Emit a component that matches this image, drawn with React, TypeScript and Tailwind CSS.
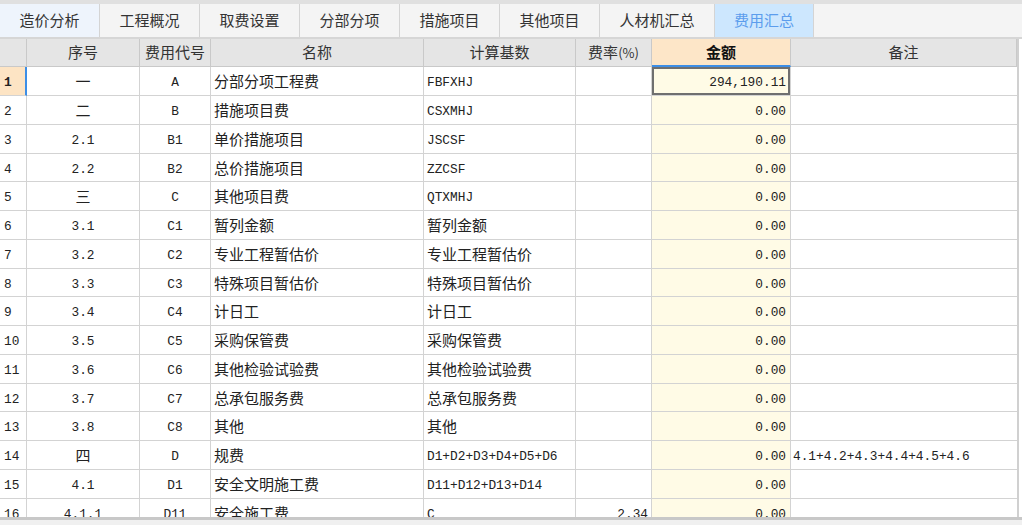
import React from "react";

const tabs = [
  { label: "造价分析", w: "w-[100px]", cls: "bg-[#eef4fc] text-[#333]" },
  { label: "工程概况", w: "w-[100px]", cls: "bg-[#f4f4f4] text-[#333]" },
  { label: "取费设置", w: "w-[100px]", cls: "bg-[#f4f4f4] text-[#333]" },
  { label: "分部分项", w: "w-[100px]", cls: "bg-[#f4f4f4] text-[#333]" },
  { label: "措施项目", w: "w-[100px]", cls: "bg-[#f4f4f4] text-[#333]" },
  { label: "其他项目", w: "w-[100px]", cls: "bg-[#f4f4f4] text-[#333]" },
  { label: "人材机汇总", w: "w-[115px]", cls: "bg-[#f4f4f4] text-[#333]" },
  { label: "费用汇总", w: "w-[99px]", cls: "bg-[#cde7fe] text-[#5c9ded]" },
];

type Row = [string, string, string, string, string, string, string];

const rows: Row[] = [
  ["一", "A", "分部分项工程费", "FBFXHJ", "", "294,190.11", ""],
  ["二", "B", "措施项目费", "CSXMHJ", "", "0.00", ""],
  ["2.1", "B1", "单价措施项目", "JSCSF", "", "0.00", ""],
  ["2.2", "B2", "总价措施项目", "ZZCSF", "", "0.00", ""],
  ["三", "C", "其他项目费", "QTXMHJ", "", "0.00", ""],
  ["3.1", "C1", "暂列金额", "暂列金额", "", "0.00", ""],
  ["3.2", "C2", "专业工程暂估价", "专业工程暂估价", "", "0.00", ""],
  ["3.3", "C3", "特殊项目暂估价", "特殊项目暂估价", "", "0.00", ""],
  ["3.4", "C4", "计日工", "计日工", "", "0.00", ""],
  ["3.5", "C5", "采购保管费", "采购保管费", "", "0.00", ""],
  ["3.6", "C6", "其他检验试验费", "其他检验试验费", "", "0.00", ""],
  ["3.7", "C7", "总承包服务费", "总承包服务费", "", "0.00", ""],
  ["3.8", "C8", "其他", "其他", "", "0.00", ""],
  ["四", "D", "规费", "D1+D2+D3+D4+D5+D6", "", "0.00", "4.1+4.2+4.3+4.4+4.5+4.6"],
  ["4.1", "D1", "安全文明施工费", "D11+D12+D13+D14", "", "0.00", ""],
  ["4.1.1", "D11", "安全施工费", "C", "2.34", "0.00", ""],
];

const cols = "grid grid-cols-[27px_113px_71px_213px_152px_76px_139px_226px]";
const cjk = "font-['Noto_Sans_CJK_SC',sans-serif] text-[15px]";
const mono = "font-['Liberation_Mono','Noto_Sans_CJK_SC',monospace] text-[12.8px]";

function T({ s }: { s: string }) {
  // ascii goes monospace, the rest gets the CJK face; nudge so both sit on the same middle
  const ascii = /^[\x00-\x7f]*$/.test(s);
  return (
    <span className={`inline-block leading-none ${ascii ? `${mono} pt-[5px]` : `${cjk} pb-[1px]`}`}>
      {s}
    </span>
  );
}

export default function App() {
  return (
    <div className="w-[1022px] h-[525px] overflow-hidden bg-white text-[#222] flex flex-col">
      <div className="h-[4px] bg-[#e0e0e0]" />
      <div className="h-[33px] flex bg-[#f4f4f4]">
        {tabs.map((t) => (
          <div
            key={t.label}
            className={`${t.w} ${t.cls} ${cjk} border-r border-[#d4d4d4] flex items-center justify-center`}
          >
            {t.label}
          </div>
        ))}
      </div>
      <div className="h-[2px] bg-[#d6d6d6]" />

      <div className="h-[478px] overflow-hidden">
        <div className="w-[1019px] border-r-2 border-[#d0d0d0]">
          <div className={`${cols} h-[28px] bg-[#e5e5e5] text-[#333] ${cjk}`}>
            <div className="border-r border-b border-[#c9c9c9]" />
            <div className="border-r border-b border-[#c9c9c9] flex items-center justify-center">序号</div>
            <div className="border-r border-b border-[#c9c9c9] flex items-center justify-center">费用代号</div>
            <div className="border-r border-b border-[#c9c9c9] flex items-center justify-center">名称</div>
            <div className="border-r border-b border-[#c9c9c9] flex items-center justify-center">计算基数</div>
            <div className="border-r border-b border-[#c9c9c9] flex items-center justify-center">
              费率<span className="text-[13px]">(%)</span>
            </div>
            <div className="border-r border-b-2 border-[#c9c9c9] border-b-[#3d8ee6] bg-[#fde6c8] flex items-center justify-center font-bold text-[#111]">
              金额
            </div>
            <div className="border-r border-b border-[#c9c9c9] flex items-center justify-center">备注</div>
          </div>

          {rows.map((r, i) => {
            const h = i % 4 === 3 ? "h-[28px]" : "h-[29px]";
            const first = i === 0;
            return (
              <div key={i} className={`${cols} ${h}`}>
                <div
                  className={`border-b border-[#d3d3d3] flex items-center pl-[4px] pt-[5px] leading-none ${mono} ${
                    first ? "bg-[#fde4c4] font-bold border-r-2 border-r-[#3d8ee6]" : "border-r"
                  }`}
                >
                  {i + 1}
                </div>
                <div className="border-r border-b border-[#d3d3d3] flex items-center justify-center">
                  <T s={r[0]} />
                </div>
                <div className="border-r border-b border-[#d3d3d3] flex items-center justify-center">
                  <T s={r[1]} />
                </div>
                <div className="border-r border-b border-[#d3d3d3] flex items-center pl-[3px] overflow-hidden whitespace-nowrap">
                  <T s={r[2]} />
                </div>
                <div className="border-r border-b border-[#d3d3d3] flex items-center pl-[3px] overflow-hidden whitespace-nowrap">
                  <T s={r[3]} />
                </div>
                <div className="border-r border-b border-[#d3d3d3] flex items-center justify-end pr-[3px]">
                  <T s={r[4]} />
                </div>
                <div
                  className={`border-r border-b border-[#d3d3d3] bg-[#fffbe6] flex items-center justify-end pr-[4px] ${
                    first ? "shadow-[inset_0_0_0_2px_#6f6f6f]" : ""
                  }`}
                >
                  <T s={r[5]} />
                </div>
                <div className="border-b border-[#d3d3d3] flex items-center pl-[2px] overflow-hidden whitespace-nowrap">
                  <T s={r[6]} />
                </div>
              </div>
            );
          })}
        </div>
      </div>
      <div className="h-[3px] bg-[#c8c8c8]" />
      <div className="flex-1 bg-[#f0f0f0]" />
    </div>
  );
}
